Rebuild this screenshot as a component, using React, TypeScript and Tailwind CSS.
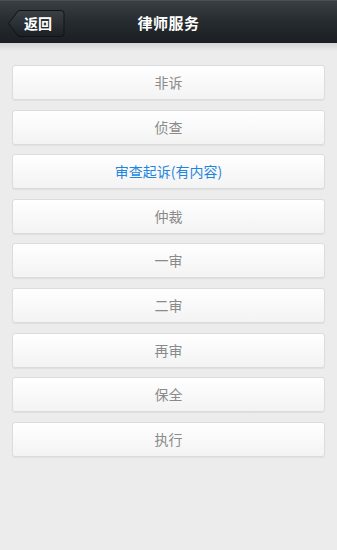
import React from "react";

const items = ["非诉", "侦查", "审查起诉(有内容)", "仲裁", "一审", "二审", "再审", "保全", "执行"];

export default function App() {
  return (
    <div
      className="w-[337px] h-[550px] bg-[#ececec] flex flex-col overflow-hidden"
      style={{ fontFamily: '"Noto Sans CJK SC", "Liberation Sans", sans-serif' }}
    >
      <div className="relative h-[43px] shrink-0 bg-gradient-to-b from-[#3a3f44] via-[#262b30] to-[#1b1f23] border-t border-[#4a4f55] flex items-center justify-center">
        <div className="absolute left-[8px] top-[9px] h-[26px] flex items-center">
          <svg width="57" height="27" viewBox="0 0 57 27" className="absolute left-0 top-0">
            <defs>
              <linearGradient id="bk" x1="0" y1="0" x2="0" y2="1">
                <stop offset="0" stopColor="#3b4046" />
                <stop offset="1" stopColor="#1c2024" />
              </linearGradient>
            </defs>
            <path d="M0.5 13.5 L10 1 Q11 0.5 12 0.5 L53 0.5 Q56 0.5 56 3.5 L56 23.5 Q56 26.5 53 26.5 L12 26.5 Q11 26.5 10 26 Z" fill="url(#bk)" stroke="#111417" strokeWidth="1" />
          </svg>
          <span className="relative pl-[16px] text-[14px] font-semibold text-white leading-none">返回</span>
        </div>
        <span className="text-[15px] font-bold text-white tracking-[0.5px] leading-none">律师服务</span>
      </div>
      <div className="h-[8px] bg-gradient-to-b from-[#d4d4d4] to-[#ececec] shrink-0" />
      <div className="flex flex-col gap-[9.6px] px-[12px] pt-[14px]">
        {items.map((t, i) => (
          <div
            key={t}
            className={`h-[35px] rounded-[3px] border border-[#dcdcdc] bg-gradient-to-b from-white to-[#f3f3f3] shadow-[0_1px_1px_rgba(0,0,0,0.06)] flex items-center justify-center text-[14px] ${
              i === 2 ? "text-[#1f86dd]" : "text-[#8a8a8a]"
            }`}
          >
            {t}
          </div>
        ))}
      </div>
    </div>
  );
}
